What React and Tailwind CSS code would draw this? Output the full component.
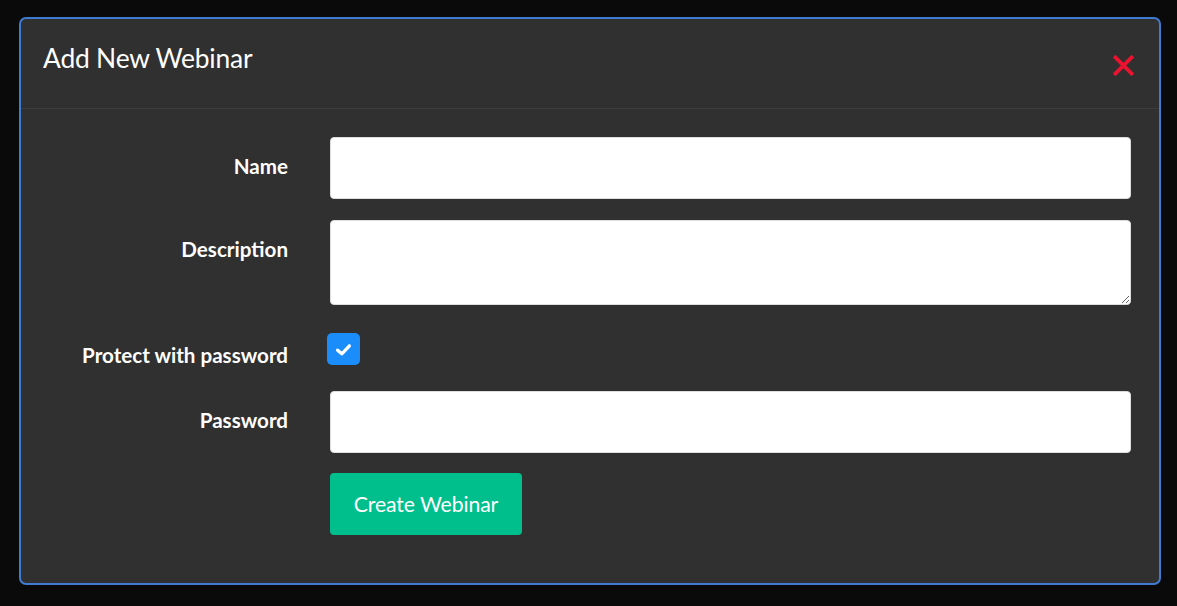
import React from "react";

export default function App() {
  const font = { fontFamily: "Lato, 'Noto Sans', sans-serif" };
  return (
    <div className="w-[1177px] h-[606px] bg-[#0a0a0a] pt-[17px] pl-[19px] pr-[16px] pb-[21px]" style={font}>
      <div className="h-full w-full rounded-[7px] border-2 border-[#3f7bd1] bg-[#303030] flex flex-col">
        <div className="h-[90px] flex items-start justify-between border-b border-[#3c3c3c] pl-[22px] pr-[24px]">
          <h1 className="text-[26.4px] text-white mt-[24px] leading-[30px] tracking-[-0.2px]">Add New Webinar</h1>
          <button className="mt-[35px] w-[23px] h-[23px]">
            <svg viewBox="0 0 22 22" width="23" height="23">
              <path d="M2 2 L20 20 M20 2 L2 20" stroke="#ec1330" strokeWidth="3.6" strokeLinecap="butt" />
            </svg>
          </button>
        </div>
        <div className="flex flex-col pt-[28px] pr-[28px]">
          <div className="flex">
            <label className="w-[267px] shrink-0 text-right text-white font-bold text-[20.6px] pt-[17px] leading-[24px]">Name</label>
            <input className="ml-[42px] flex-1 h-[62px] bg-white rounded-[4px] border border-[#ddd] outline-none" />
          </div>
          <div className="flex mt-[21px]">
            <label className="w-[267px] shrink-0 text-right text-white font-bold text-[20.6px] pt-[17px] leading-[24px]">Description</label>
            <textarea className="ml-[42px] flex-1 h-[85px] bg-white rounded-[4px] border border-[#ddd] outline-none" />
          </div>
          <div className="flex mt-[28px] h-[32px]">
            <label className="w-[267px] shrink-0 text-right text-white font-bold text-[20.6px] pt-[10px] leading-[24px]">Protect with password</label>
            <div className="ml-[39px] w-[33px] h-[32px] rounded-[5px] bg-[#1a8dfa] flex items-center justify-center">
              <svg viewBox="0 0 16 16" width="21" height="21">
                <path d="M3.5 8.5 L6.7 11.3 L12.5 5.2" stroke="white" strokeWidth="2.5" fill="none" strokeLinecap="round" strokeLinejoin="round" />
              </svg>
            </div>
          </div>
          <div className="flex mt-[26px]">
            <label className="w-[267px] shrink-0 text-right text-white font-bold text-[20.6px] pt-[17px] leading-[24px]">Password</label>
            <input type="password" className="ml-[42px] flex-1 h-[62px] bg-white rounded-[4px] border border-[#ddd] outline-none" />
          </div>
          <div className="flex mt-[20px]">
            <div className="w-[267px] shrink-0" />
            <button className="ml-[42px] w-[192px] h-[62px] rounded-[4px] bg-[#00bf8d] text-white text-[21.2px] leading-[24px] tracking-[-0.1px]">Create Webinar</button>
          </div>
        </div>
      </div>
    </div>
  );
}
